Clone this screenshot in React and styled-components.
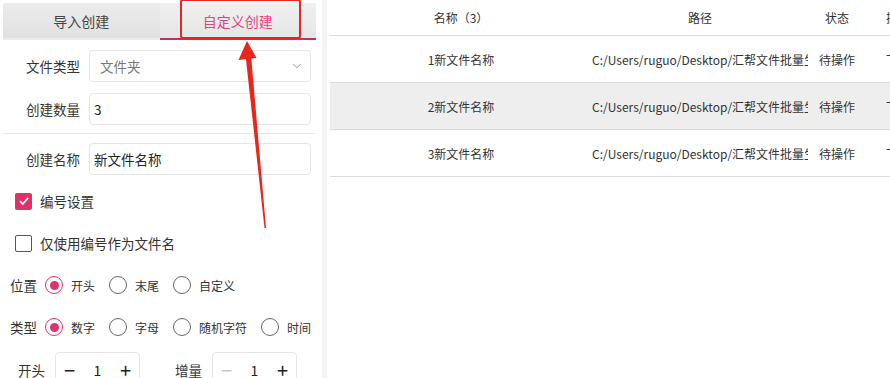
import React from 'react';
import styled, { createGlobalStyle } from 'styled-components';
import { ChevronDown } from 'lucide-react';

const PINK = '#e2306a';

const GlobalStyle = createGlobalStyle`
  html, body {
    margin: 0;
    padding: 0;
    background: #fff;
  }
  body {
    font-family: "Noto Sans CJK SC", "Noto Sans", sans-serif;
    color: #333;
  }
`;

const Page = styled.div`
  position: relative;
  width: 890px;
  height: 378px;
  overflow: hidden;
  display: flex;
  align-items: flex-start;
  background: #fff;
`;

const LeftPanel = styled.div`
  width: 313px;
  padding: 3px 2px 0 3px;
  display: flex;
  flex-direction: column;
  flex-shrink: 0;
  & > * {
    flex-shrink: 0;
  }
`;

const Gutter = styled.div`
  width: 12px;
  height: 378px;
  flex-shrink: 0;
  display: flex;
  justify-content: center;
  &::before {
    content: '';
    width: 5px;
    background: #f4f4f4;
  }
`;

const Tabs = styled.div`
  display: flex;
  height: 37px;
`;

const Tab = styled.div`
  flex: 1;
  display: flex;
  align-items: center;
  justify-content: center;
  font-size: 14px;
  color: ${p => (p.$active ? '#e0467a' : '#444')};
  background: ${p =>
    p.$active
      ? 'linear-gradient(#f0f0f0, #e6e6e6)'
      : 'linear-gradient(#ececec, #e1e1e1)'};
  border-bottom: 2px solid ${p => (p.$active ? '#b8336b' : 'transparent')};
  box-sizing: border-box;
`;

const Form = styled.div`
  display: flex;
  flex-direction: column;
  padding-top: 10px;
  & > * {
    flex-shrink: 0;
  }
`;

const FieldRow = styled.div`
  display: flex;
  align-items: center;
  gap: 9px;
  height: 32px;
  margin-bottom: ${p => p.$mb ?? 11}px;
`;

const FieldLabel = styled.div`
  width: 77px;
  text-align: right;
  font-size: 13.5px;
  color: #333;
`;

const InputBox = styled.div`
  width: 222px;
  height: 32px;
  box-sizing: border-box;
  border: 1px solid #e6e6e6;
  border-radius: 4px;
  display: flex;
  align-items: center;
  justify-content: space-between;
  padding: 0 6px 0 ${p => (p.$muted ? 10 : 4)}px;
  font-size: 13.5px;
  color: ${p => (p.$muted ? '#777' : '#222')};
  svg {
    color: #888;
  }
`;

const Divider = styled.div`
  height: 1px;
  background: #e8e8e8;
  margin: 0 0 9px;
`;

const CheckRow = styled.div`
  display: flex;
  align-items: center;
  gap: 8px;
  padding-left: 12px;
  height: 18px;
  margin: ${p => p.$m || '0'};
  font-size: 13.5px;
  color: #333;
  white-space: nowrap;
`;

const Box = styled.span`
  width: 17px;
  height: 17px;
  box-sizing: border-box;
  border-radius: 2px;
  border: ${p => (p.$checked ? 'none' : '1.5px solid #555')};
  background: ${p => (p.$checked ? PINK : '#fff')};
  display: flex;
  align-items: center;
  justify-content: center;
`;

const RadioRow = styled.div`
  display: flex;
  align-items: center;
  height: 20px;
  padding-left: 7px;
  margin: ${p => p.$m || '0'};
  white-space: nowrap;
  & > * {
    flex-shrink: 0;
  }
`;

const RowLabel = styled.span`
  font-size: 13.5px;
  color: #333;
  margin-right: 8px;
`;

const RadioItem = styled.label`
  display: flex;
  align-items: center;
  gap: 8px;
  margin-right: 14px;
  font-size: 12px;
  color: #333;
`;

const RadioCircle = styled.span`
  width: 18px;
  height: 18px;
  box-sizing: border-box;
  border-radius: 50%;
  border: 1.5px solid ${p => (p.$checked ? PINK : '#666')};
  display: flex;
  align-items: center;
  justify-content: center;
  &::after {
    content: '';
    display: ${p => (p.$checked ? 'block' : 'none')};
    width: 9px;
    height: 9px;
    border-radius: 50%;
    background: ${PINK};
  }
`;

const StepRow = styled.div`
  display: flex;
  align-items: center;
  padding-left: 15px;
  margin-top: 15px;
  white-space: nowrap;
  & > * {
    flex-shrink: 0;
  }
`;

const StepLabel = styled.span`
  font-size: 13.5px;
  color: #333;
  margin-right: 10px;
  margin-left: ${p => p.$ml || 0}px;
`;

const Stepper = styled.div`
  width: 85px;
  height: 36px;
  box-sizing: border-box;
  border: 1px solid #e6e6e6;
  border-radius: 4px;
  display: flex;
  align-items: center;
  justify-content: space-between;
  padding: 0 8px;
  font-size: 14px;
  color: #222;
`;

const StepBtn = styled.span`
  font-size: 20px;
  line-height: 1;
  color: ${p => (p.$disabled ? '#c8c8c8' : '#222')};
`;

const RightPanel = styled.div`
  flex: 1;
  min-width: 0;
  overflow: hidden;
`;

const Table = styled.div`
  width: 600px;
`;

const cols = '262px 216px 58px 64px';

const HeadRow = styled.div`
  display: grid;
  grid-template-columns: ${cols};
  height: 35px;
  align-items: center;
  border-bottom: 1px solid #dcdcdc;
  font-size: 12px;
  color: #333;
`;

const BodyRow = styled.div`
  display: grid;
  grid-template-columns: ${cols};
  height: 46px;
  align-items: center;
  border-bottom: 1px solid #dcdcdc;
  background: ${p => (p.$alt ? '#eeeeee' : '#fff')};
  font-size: 12px;
  color: #333;
`;

const Cell = styled.div`
  min-width: 0;
  text-align: ${p => p.$align || 'center'};
  white-space: nowrap;
  overflow: hidden;
`;

const Arrow = styled.svg`
  position: absolute;
  left: 0;
  top: 0;
  pointer-events: none;
`;

const Highlight = styled.div`
  position: absolute;
  left: 180px;
  top: -1px;
  width: 121px;
  height: 40px;
  box-sizing: border-box;
  border: 2.5px solid #e8261d;
  border-radius: 3px;
  pointer-events: none;
`;

const rows = [1, 2, 3];

export default function App() {
  return (
    <Page>
      <GlobalStyle />
      <LeftPanel>
        <Tabs>
          <Tab>导入创建</Tab>
          <Tab $active>自定义创建</Tab>
        </Tabs>
        <Form>
          <FieldRow>
            <FieldLabel>文件类型</FieldLabel>
            <InputBox $muted>
              文件夹
              <ChevronDown size={14} strokeWidth={1.5} />
            </InputBox>
          </FieldRow>
          <FieldRow $mb={8}>
            <FieldLabel>创建数量</FieldLabel>
            <InputBox>3</InputBox>
          </FieldRow>
          <Divider />
          <FieldRow $mb={0}>
            <FieldLabel>创建名称</FieldLabel>
            <InputBox>新文件名称</InputBox>
          </FieldRow>
          <CheckRow $m="17px 0 0">
            <Box $checked>
              <svg width="12" height="12" viewBox="0 0 12 12">
                <path d="M2 6.2 L4.8 9 L10 3" fill="none" stroke="#fff" strokeWidth="1.8" />
              </svg>
            </Box>
            编号设置
          </CheckRow>
          <CheckRow $m="24px 0 0">
            <Box />
            仅使用编号作为文件名
          </CheckRow>
          <RadioRow $m="23px 0 0">
            <RowLabel>位置</RowLabel>
            <RadioItem><RadioCircle $checked />开头</RadioItem>
            <RadioItem><RadioCircle />末尾</RadioItem>
            <RadioItem><RadioCircle />自定义</RadioItem>
          </RadioRow>
          <RadioRow $m="22px 0 0">
            <RowLabel>类型</RowLabel>
            <RadioItem><RadioCircle $checked />数字</RadioItem>
            <RadioItem><RadioCircle />字母</RadioItem>
            <RadioItem><RadioCircle />随机字符</RadioItem>
            <RadioItem><RadioCircle />时间</RadioItem>
          </RadioRow>
          <StepRow>
            <StepLabel>开头</StepLabel>
            <Stepper>
              <StepBtn>−</StepBtn>1<StepBtn>+</StepBtn>
            </Stepper>
            <StepLabel $ml={35}>增量</StepLabel>
            <Stepper>
              <StepBtn $disabled>−</StepBtn>1<StepBtn>+</StepBtn>
            </Stepper>
          </StepRow>
        </Form>
      </LeftPanel>
      <Gutter />
      <RightPanel>
        <Table>
          <HeadRow>
            <Cell>名称（3）</Cell>
            <Cell>路径</Cell>
            <Cell>状态</Cell>
            <Cell>操作</Cell>
          </HeadRow>
          {rows.map(n => (
            <BodyRow key={n} $alt={n === 2}>
              <Cell>{n}新文件名称</Cell>
              <Cell $align="left">C:/Users/ruguo/Desktop/汇帮文件批量生</Cell>
              <Cell>待操作</Cell>
              <Cell>下载</Cell>
            </BodyRow>
          ))}
        </Table>
      </RightPanel>
      <Highlight />
      <Arrow width="890" height="378">
        <polygon points="245.5,55 251,55 266,228 264.5,228" fill="#e8261d" />
        <polygon points="247,41 238.5,60 256.5,58" fill="#e8261d" />
      </Arrow>
    </Page>
  );
}
